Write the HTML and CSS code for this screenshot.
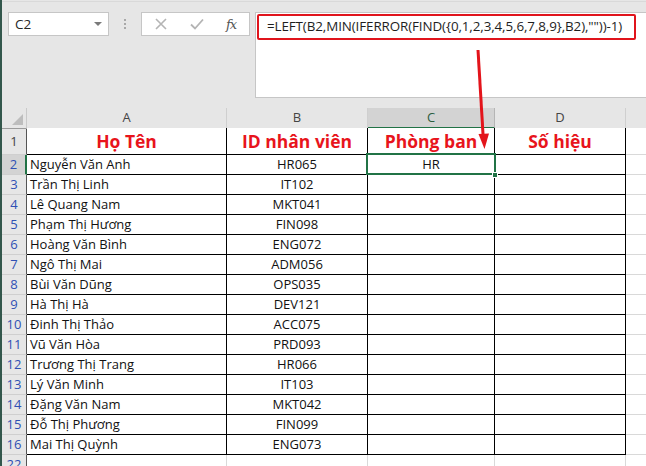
FILE: index.html
```html
<!DOCTYPE html>
<html>
<head>
<meta charset="utf-8">
<link rel="stylesheet" href="styles.css">
</head>
<body>
<div class="app">
  <div class="toolbar">
    <div class="namebox">
      <span class="ref">C2</span>
      <span class="caret"></span>
    </div>
    <div class="dots"><i></i><i></i><i></i></div>
    <div class="buttons">
      <svg class="btn-x" width="12" height="12" viewBox="0 0 12 12"><path d="M1 1L11 11M11 1L1 11" stroke="#b4b4b4" stroke-width="1.6" fill="none"/></svg>
      <svg class="btn-ok" width="14" height="12" viewBox="0 0 14 12"><path d="M1 6.5L5 10.5L13 1.5" stroke="#b4b4b4" stroke-width="1.8" fill="none"/></svg>
      <span class="fx">fx</span>
    </div>
    <div class="formulabar">
      <div class="formula">=LEFT(B2,MIN(IFERROR(FIND({0,1,2,3,4,5,6,7,8,9},B2),""))-1)</div>
    </div>
  </div>

  <div class="sheet">
    <div class="row colhead">
      <div class="corner"><span class="tri"></span></div>
      <div class="ch">A</div>
      <div class="ch">B</div>
      <div class="ch sel">C</div>
      <div class="ch">D</div>
      <div class="ch e"></div>
    </div>
    <div class="row r1">
      <div class="rh plain">1</div>
      <div class="c hd">Họ Tên</div>
      <div class="c hd">ID nhân viên</div>
      <div class="c hd">Phòng ban</div>
      <div class="c hd">Số hiệu</div>
      <div class="c e"></div>
    </div>
    <div class="row">
      <div class="rh selrow">2</div>
      <div class="c name">Nguyễn Văn Anh</div>
      <div class="c id">HR065</div>
      <div class="c id active">HR<span class="handle"></span></div>
      <div class="c"></div>
      <div class="c e"></div>
    </div>
    <div class="row"><div class="rh">3</div><div class="c name">Trần Thị Linh</div><div class="c id">IT102</div><div class="c"></div><div class="c"></div><div class="c e"></div></div>
    <div class="row"><div class="rh">4</div><div class="c name">Lê Quang Nam</div><div class="c id">MKT041</div><div class="c"></div><div class="c"></div><div class="c e"></div></div>
    <div class="row"><div class="rh">5</div><div class="c name">Phạm Thị Hương</div><div class="c id">FIN098</div><div class="c"></div><div class="c"></div><div class="c e"></div></div>
    <div class="row"><div class="rh">6</div><div class="c name">Hoàng Văn Bình</div><div class="c id">ENG072</div><div class="c"></div><div class="c"></div><div class="c e"></div></div>
    <div class="row"><div class="rh">7</div><div class="c name">Ngô Thị Mai</div><div class="c id">ADM056</div><div class="c"></div><div class="c"></div><div class="c e"></div></div>
    <div class="row"><div class="rh">8</div><div class="c name">Bùi Văn Dũng</div><div class="c id">OPS035</div><div class="c"></div><div class="c"></div><div class="c e"></div></div>
    <div class="row"><div class="rh">9</div><div class="c name">Hà Thị Hà</div><div class="c id">DEV121</div><div class="c"></div><div class="c"></div><div class="c e"></div></div>
    <div class="row"><div class="rh">10</div><div class="c name">Đinh Thị Thảo</div><div class="c id">ACC075</div><div class="c"></div><div class="c"></div><div class="c e"></div></div>
    <div class="row"><div class="rh">11</div><div class="c name">Vũ Văn Hòa</div><div class="c id">PRD093</div><div class="c"></div><div class="c"></div><div class="c e"></div></div>
    <div class="row"><div class="rh">12</div><div class="c name">Trương Thị Trang</div><div class="c id">HR066</div><div class="c"></div><div class="c"></div><div class="c e"></div></div>
    <div class="row"><div class="rh">13</div><div class="c name">Lý Văn Minh</div><div class="c id">IT103</div><div class="c"></div><div class="c"></div><div class="c e"></div></div>
    <div class="row"><div class="rh">14</div><div class="c name">Đặng Văn Nam</div><div class="c id">MKT042</div><div class="c"></div><div class="c"></div><div class="c e"></div></div>
    <div class="row"><div class="rh">15</div><div class="c name">Đỗ Thị Phương</div><div class="c id">FIN099</div><div class="c"></div><div class="c"></div><div class="c e"></div></div>
    <div class="row"><div class="rh">16</div><div class="c name">Mai Thị Quỳnh</div><div class="c id">ENG073</div><div class="c"></div><div class="c"></div><div class="c e"></div></div>
    <div class="row after"><div class="rh">22</div><div class="c g"></div><div class="c g"></div><div class="c g"></div><div class="c g"></div><div class="c e"></div></div>
  </div>

  <svg class="arrow" width="646" height="466" viewBox="0 0 646 466">
    <line x1="478" y1="50" x2="483.2" y2="137" stroke="#e3141b" stroke-width="3"/>
    <polygon points="478.5,134 489,133.5 484.5,149" fill="#e3141b"/>
  </svg>
</div>
</body>
</html>
```

FILE: styles.css
```css
* { box-sizing: border-box; }
html, body { margin: 0; padding: 0; }
body {
  width: 646px;
  height: 466px;
  overflow: hidden;
  font-family: "Open Sans", "Noto Sans", sans-serif;
  background: #e6e6e6;
}
.app {
  position: relative;
  width: 646px;
  height: 466px;
  overflow: hidden;
  background: #e6e6e6;
  border-left: 2px solid #33574c;
}
.toolbar {
  display: flex;
  align-items: flex-start;
  height: 107px;
  padding-top: 12px;
  border-top: 1px solid #d9d9d9;
  margin-top: 1px;
}
.toolbar { padding-top: 10px; }
.namebox {
  width: 101px;
  height: 24px;
  margin-left: 6px;
  background: #fff;
  border: 1px solid #c6c6c6;
  display: flex;
  align-items: center;
  justify-content: space-between;
  padding: 0 6px 0 6px;
}
.ref { font-size: 13.5px; color: #262626; }
.caret {
  width: 0; height: 0;
  border-left: 4px solid transparent;
  border-right: 4px solid transparent;
  border-top: 4px solid #7a7a7a;
}
.dots {
  width: 32px;
  height: 24px;
  display: flex;
  flex-direction: column;
  align-items: center;
  justify-content: center;
  gap: 2px;
}
.dots i {
  display: block;
  width: 2px; height: 2px;
  background: #a8a8a8;
}
.buttons {
  width: 109px;
  height: 24px;
  background: #fff;
  border: 1px solid #c6c6c6;
  display: flex;
  align-items: center;
  padding-left: 13px;
}
.btn-x { margin-right: 23px; }
.btn-ok { margin-right: 22px; }
.fx {
  font-family: "DejaVu Serif", "Liberation Serif", serif;
  font-style: italic;
  font-size: 13px;
  color: #555;
  letter-spacing: -1px;
}
.formulabar {
  flex: 1;
  height: 86px;
  margin-left: 5px;
  background: #fff;
  border: 1px solid #c6c6c6;
  border-right: none;
  padding: 1px 0 0 1px;
}
.formula {
  width: 379px;
  height: 26px;
  border: 2.5px solid #e0141c;
  border-radius: 2px;
  font-size: 13.4px;
  color: #1e1e1e;
  padding-left: 8px;
  line-height: 20px;
  white-space: nowrap;
  letter-spacing: -0.1px;
}

.row {
  display: grid;
  grid-template-columns: 25px 200px 141px 127px 131px 20px;
  height: 20px;
}
.colhead { height: 20px; }
.r1 { height: 27px; }
.corner {
  position: relative;
  border-right: 1px solid #c9c9c9;
  border-bottom: 1px solid #9b9b9b;
}
.tri {
  position: absolute;
  right: 3px;
  bottom: 3px;
  width: 0; height: 0;
  border-left: 11px solid transparent;
  border-bottom: 11px solid #bdbdbd;
}
.ch {
  font-size: 13px;
  color: #444;
  text-align: center;
  line-height: 19px;
  border-right: 1px solid #cfcfcf;
  border-bottom: 1px solid #222;
  background: #e6e6e6;
}
.ch.e { border-bottom-color: #9b9b9b; border-right: none; }
.ch.sel {
  background: #d3d3d3;
  color: #2b5d3f;
  border-bottom: 2px solid #217346;
  border-right-color: #b5b5b5;
}
.rh {
  font-size: 13px;
  color: #2f50b4;
  text-align: center;
  line-height: 19px;
  border-right: 1px solid #555;
  border-bottom: 1px solid #cfcfcf;
  background: #e6e6e6;
}
.rh.plain { color: #444; line-height: 26px; }
.rh.selrow {
  background: #d3d3d3;
  border-right: 2px solid #217346;
}
.c {
  background: #fff;
  border-right: 1px solid #000;
  border-bottom: 1px solid #000;
  font-size: 13px;
  color: #111;
  line-height: 19px;
  white-space: nowrap;
  overflow: visible;
}
.c.e {
  border-right: none;
  border-bottom: 1px solid #d9d9d9;
}
.c.g {
  border-right: 1px solid #d9d9d9;
  border-bottom: 1px solid #d9d9d9;
}
.name { padding-left: 3px; }
.id { text-align: center; }
.hd {
  color: #e8141c;
  font-weight: 700;
  font-size: 17.5px;
  text-align: center;
  line-height: 26px;
}
.active { position: relative; }
.active::after {
  content: "";
  position: absolute;
  left: -2px;
  top: -2px;
  right: -2px;
  bottom: -1px;
  border: 2px solid #217346;
  pointer-events: none;
}
.handle {
  position: absolute;
  right: -4px;
  bottom: -4px;
  width: 6px;
  height: 6px;
  background: #217346;
  border: 1px solid #fff;
  z-index: 2;
}
.arrow {
  position: absolute;
  left: -2px;
  top: 0;
  pointer-events: none;
}
```
